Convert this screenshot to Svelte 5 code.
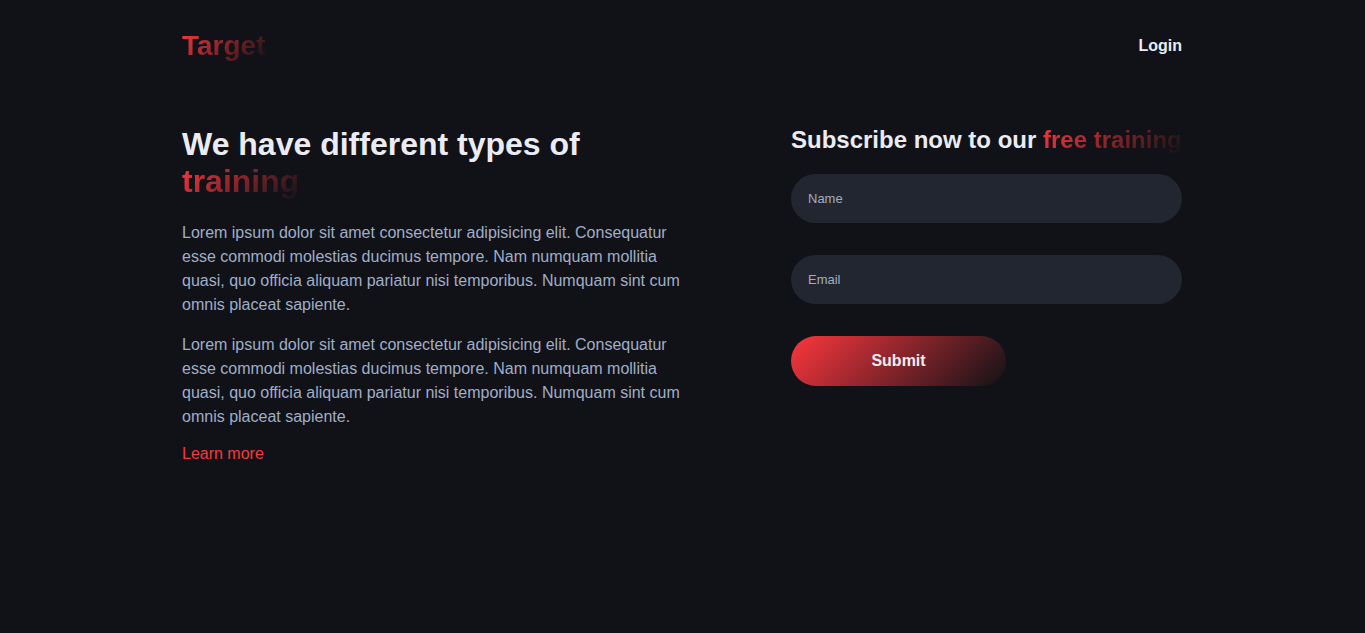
<script>
  let name = $state('');
  let email = $state('');
  const paragraphs = [1, 2];
  const submit = (event) => event.preventDefault();
</script>

<div class="container">
  <header>
    <a class="logo" href="#home"><span class="accent">Target</span></a>
    <a class="login" href="#login">Login</a>
  </header>
  <main>
    <section class="intro">
      <h1>We have different types of <span class="accent">training</span></h1>
      {#each paragraphs as id (id)}
        <p>
          Lorem ipsum dolor sit amet consectetur adipisicing elit. Consequatur esse commodi
          molestias ducimus tempore. Nam numquam mollitia quasi, quo officia aliquam pariatur
          nisi temporibus. Numquam sint cum omnis placeat sapiente.
        </p>
      {/each}
      <a class="more" href="#learn">Learn more</a>
    </section>
    <section class="subscribe">
      <h2>Subscribe now to our <span class="accent">free training</span></h2>
      <form onsubmit={submit}>
        <input type="text" placeholder="Name" aria-label="Name" bind:value={name} />
        <input type="email" placeholder="Email" aria-label="Email" bind:value={email} />
        <button type="submit">Submit</button>
      </form>
    </section>
  </main>
</div>

<style>
  :global(body) {
    background: #111217;
    color: #ebecf3;
    font-family: "Liberation Sans", Arial, sans-serif;
    font-size: 16px;
  }
  .container {
    max-width: 1000px;
    margin: 0 auto;
    padding-right: 1px;
  }
  a {
    text-decoration: none;
  }
  .accent {
    background: linear-gradient(135deg, #fb363d, #111217);
    background-clip: text;
    color: transparent;
  }
  header {
    display: flex;
    align-items: center;
    justify-content: space-between;
    padding: 30px 0;
  }
  .logo {
    font-size: 28px;
    line-height: 32px;
    font-weight: 700;
  }
  .login {
    color: inherit;
    font-weight: 700;
  }
  main {
    display: flex;
    justify-content: space-between;
    gap: 64px;
    padding-top: 34px;
  }
  .intro {
    flex: 0 1 500px;
  }
  h1 {
    margin: 0 0 21px;
    font-size: 32px;
    line-height: 37px;
  }
  p {
    margin: 0 0 16px;
    color: #a0aec8;
    line-height: 24px;
  }
  .more {
    color: #fb363d;
  }
  .subscribe {
    flex: 0 1 391px;
  }
  h2 {
    margin: 0 0 20px;
    font-size: 24px;
    line-height: 28px;
  }
  form {
    display: flex;
    flex-direction: column;
    align-items: flex-start;
    gap: 32px;
  }
  input {
    box-sizing: border-box;
    width: 100%;
    height: 49px;
    padding: 0 17px;
    border: 0;
    border-radius: 25px;
    background: #222630;
    color: inherit;
    font: 13px "Liberation Sans", Arial, sans-serif;
  }
  input::placeholder {
    color: #a0aec0;
  }
  button {
    width: 55%;
    height: 50px;
    border: 0;
    border-radius: 25px;
    background: linear-gradient(135deg, #fb363d, #111217);
    color: inherit;
    font: 700 16px "Liberation Sans", Arial, sans-serif;
    cursor: pointer;
  }
</style>
